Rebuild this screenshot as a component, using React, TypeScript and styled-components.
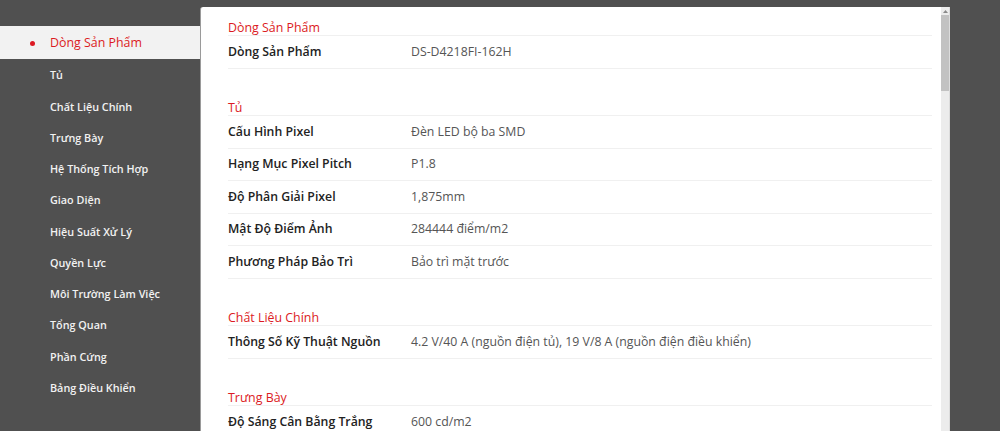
import React from "react";
import styled, { createGlobalStyle } from "styled-components";

const Global = createGlobalStyle`
  html, body { margin: 0; padding: 0; overflow: hidden; }
  body {
    background: #505050;
    font-family: "Open Sans", "Liberation Sans", Arial, sans-serif;
  }
`;

const RED = "#dc1a23";

const Page = styled.div`
  display: flex;
  align-items: flex-start;
  height: 431px;
  overflow: hidden;
`;

const Sidebar = styled.nav`
  width: 200px;
  flex: none;
  padding-top: 26px;
  display: flex;
  flex-direction: column;
`;

const NavItem = styled.div<{ $active?: boolean }>`
  position: relative;
  padding: ${(p) => (p.$active ? "7px" : "6px")} 0 ${(p) => (p.$active ? "7px" : "6px")} 50px;
  line-height: 19.27px;
  font-size: ${(p) => (p.$active ? "12.4px" : "10.8px")};
  font-weight: ${(p) => (p.$active ? 400 : 600)};
  color: ${(p) => (p.$active ? RED : "#f2f2f2")};
  background: ${(p) => (p.$active ? "#f2f2f2" : "transparent")};
  white-space: nowrap;
`;

const Dot = styled.span`
  position: absolute;
  left: 30px;
  top: 50%;
  width: 5px;
  height: 5px;
  margin-top: -2px;
  border-radius: 50%;
  background: ${RED};
`;

const Panel = styled.main`
  margin-top: 7px;
  width: 750px;
  height: 440px;
  flex: none;
  display: flex;
  background: #fff;
  border-left: 1px solid #9a9a9a;
  border-top-left-radius: 3px;
  box-sizing: border-box;
  overflow: hidden;
`;

const Content = styled.div`
  flex: 1;
  min-width: 0;
  padding: 8.5px 9px 0 27px;
`;

const ScrollTrack = styled.div`
  width: 8px;
  flex: none;
  background: #ececec;
  border-right: 1px solid #dcdcdc;
  display: flex;
  flex-direction: column;
`;

const ScrollButton = styled.div`
  height: 8px;
  display: flex;
  align-items: center;
  justify-content: center;
`;

const ScrollThumb = styled.div`
  height: 76px;
  background: #c2c2c2;
`;

const Section = styled.section`
  margin-bottom: 27px;
`;

const SectionTitle = styled.h3`
  margin: 0;
  padding-top: 4px;
  font-size: 12.4px;
  font-weight: 400;
  line-height: 15.5px;
  color: ${RED};
  border-bottom: 1px solid #f0f0f0;
`;

const Row = styled.div`
  display: grid;
  grid-template-columns: 183px 1fr;
  padding: 5.5px 0 6.5px;
  font-size: 12.3px;
  line-height: 19.5px;
  border-bottom: 1px solid #f0f0f0;
`;

const Label = styled.div`
  font-weight: 600;
  color: #222;
`;

const Value = styled.div`
  color: #555;
`;

type Spec = { title: string; rows: [string, string][] };

const specs: Spec[] = [
  { title: "Dòng Sản Phẩm", rows: [["Dòng Sản Phẩm", "DS-D4218FI-162H"]] },
  {
    title: "Tủ",
    rows: [
      ["Cấu Hình Pixel", "Đèn LED bộ ba SMD"],
      ["Hạng Mục Pixel Pitch", "P1.8"],
      ["Độ Phân Giải Pixel", "1,875mm"],
      ["Mật Độ Điểm Ảnh", "284444 điểm/m2"],
      ["Phương Pháp Bảo Trì", "Bảo trì mặt trước"],
    ],
  },
  {
    title: "Chất Liệu Chính",
    rows: [["Thông Số Kỹ Thuật Nguồn", "4.2 V/40 A (nguồn điện tủ), 19 V/8 A (nguồn điện điều khiển)"]],
  },
  {
    title: "Trưng Bày",
    rows: [
      ["Độ Sáng Cân Bằng Trắng", "600 cd/m2"],
      ["Nhiệt Độ Màu", "6500 K ± 500 K"],
      ["Góc Nhìn", "160° (ngang), 140° (dọc)"],
      ["Tỷ Lệ Tương Phản", "5000:1"],
      ["Thang Độ Xám", "14 bit"],
      ["Tần Số Làm Tươi", "3840 Hz"],
    ],
  },
  {
    title: "Hệ Thống Tích Hợp",
    rows: [
      ["Bộ Điều Khiển", "Bộ điều khiển tích hợp"],
      ["Số Lượng Mô-đun", "4 mô-đun/tủ"],
      ["Kích Thước Mô-đun", "240 mm × 270 mm"],
    ],
  },
  {
    title: "Giao Diện",
    rows: [
      ["Đầu Vào Video", "HDMI × 1, DVI × 1"],
      ["Cổng Mạng", "RJ45 × 2"],
      ["Cổng Điều Khiển", "RS-232 × 1"],
    ],
  },
  {
    title: "Hiệu Suất Xử Lý",
    rows: [
      ["Tốc Độ Khung Hình", "50/60 Hz"],
      ["Chế Độ Quét", "1/32"],
      ["Độ Sâu Màu", "16 bit"],
    ],
  },
  {
    title: "Quyền Lực",
    rows: [
      ["Điện Áp Đầu Vào", "100 VAC đến 240 VAC"],
      ["Công Suất Tối Đa", "≤ 800 W/m2"],
      ["Công Suất Trung Bình", "≤ 270 W/m2"],
    ],
  },
  {
    title: "Môi Trường Làm Việc",
    rows: [
      ["Nhiệt Độ Làm Việc", "-10 °C đến 40 °C"],
      ["Độ Ẩm Làm Việc", "10% đến 80% (không ngưng tụ)"],
      ["Nhiệt Độ Bảo Quản", "-20 °C đến 60 °C"],
    ],
  },
  {
    title: "Tổng Quan",
    rows: [
      ["Kích Thước Tủ", "480 mm × 540 mm × 68 mm"],
      ["Trọng Lượng Tủ", "7,5 kg"],
      ["Vật Liệu Tủ", "Nhôm đúc"],
    ],
  },
  {
    title: "Phần Cứng",
    rows: [
      ["Độ Phẳng", "≤ 0,1 mm"],
      ["Khe Hở Giữa Các Tủ", "≤ 0,1 mm"],
    ],
  },
  {
    title: "Bảng Điều Khiển",
    rows: [
      ["Phần Mềm", "Hỗ trợ"],
      ["Tuổi Thọ", "100000 giờ"],
    ],
  },
];

const navItems = specs.map((s) => s.title);

export default function App() {
  return (
    <>
      <Global />
      <Page>
        <Sidebar>
          {navItems.map((n, i) => (
            <NavItem key={n} $active={i === 0}>
              {i === 0 && <Dot />}
              {n}
            </NavItem>
          ))}
        </Sidebar>
        <Panel>
          <Content>
            {specs.map((s) => (
              <Section key={s.title}>
                <SectionTitle>{s.title}</SectionTitle>
                {s.rows.map(([l, v]) => (
                  <Row key={l}>
                    <Label>{l}</Label>
                    <Value>{v}</Value>
                  </Row>
                ))}
              </Section>
            ))}
          </Content>
          <ScrollTrack>
            <ScrollButton>
              <svg width="5" height="3" viewBox="0 0 5 3">
                <path d="M2.5 0 L5 3 L0 3 Z" fill="#8a8a8a" />
              </svg>
            </ScrollButton>
            <ScrollThumb />
          </ScrollTrack>
        </Panel>
      </Page>
    </>
  );
}
